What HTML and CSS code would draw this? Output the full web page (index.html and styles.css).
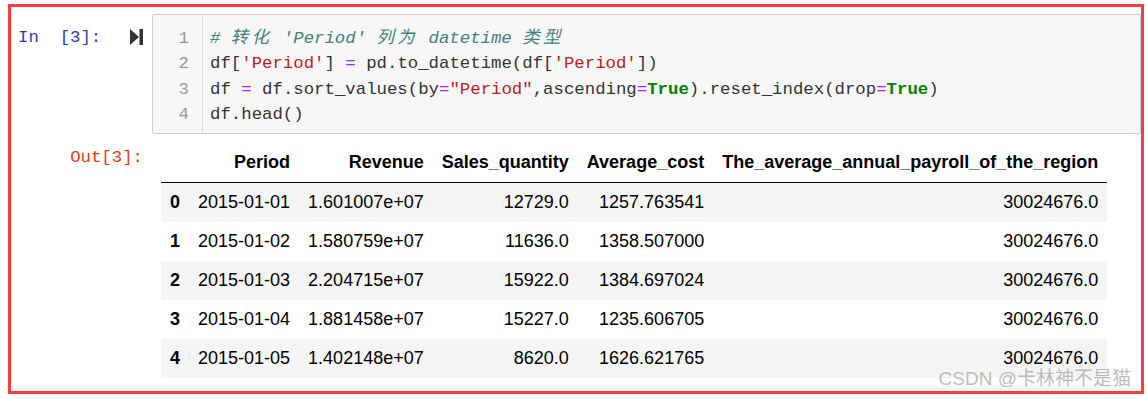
FILE: index.html
```html
<!DOCTYPE html>
<html lang="zh-CN">
<head>
  <meta charset="UTF-8">
  <title>df.head()</title>
  <link rel="stylesheet" href="styles.css">
</head>
<body>
  <div class="frame">
    <!-- 输入单元格 -->
    <div class="cell input-cell">
      <div class="prompt in-prompt">
        <span class="prompt-text">In  [3]:</span>
        <svg class="run-icon" width="13" height="16" viewBox="0 0 13 16">
          <polygon points="0,0 9,8 0,16" fill="#333"/>
          <rect x="9.5" y="0" width="3.5" height="16" fill="#333"/>
        </svg>
      </div>
      <div class="code-box">
        <div class="gutter">
          <div>1</div>
          <div>2</div>
          <div>3</div>
          <div>4</div>
        </div>
        <div class="code">
          <div class="line"><span class="c"># <span class="cjk">转化</span> 'Period' <span class="cjk">列为</span> datetime <span class="cjk">类型</span></span></div>
          <div class="line">df[<span class="s">'Period'</span>] <span class="o">=</span> pd.to_datetime(df[<span class="s">'Period'</span>])</div>
          <div class="line">df <span class="o">=</span> df.sort_values(by<span class="o">=</span><span class="s">"Period"</span>,ascending<span class="o">=</span><span class="k">True</span>).reset_index(drop<span class="o">=</span><span class="k">True</span>)</div>
          <div class="line">df.head()</div>
        </div>
      </div>
    </div>

    <!-- 输出单元格 -->
    <div class="cell output-cell">
      <div class="prompt out-prompt">Out[3]:</div>
      <div class="output">
        <table class="dataframe">
          <thead>
            <tr>
              <th></th>
              <th>Period</th>
              <th>Revenue</th>
              <th>Sales_quantity</th>
              <th>Average_cost</th>
              <th>The_average_annual_payroll_of_the_region</th>
            </tr>
          </thead>
          <tbody>
            <tr><th>0</th><td>2015-01-01</td><td>1.601007e+07</td><td>12729.0</td><td>1257.763541</td><td>30024676.0</td></tr>
            <tr><th>1</th><td>2015-01-02</td><td>1.580759e+07</td><td>11636.0</td><td>1358.507000</td><td>30024676.0</td></tr>
            <tr><th>2</th><td>2015-01-03</td><td>2.204715e+07</td><td>15922.0</td><td>1384.697024</td><td>30024676.0</td></tr>
            <tr><th>3</th><td>2015-01-04</td><td>1.881458e+07</td><td>15227.0</td><td>1235.606705</td><td>30024676.0</td></tr>
            <tr><th>4</th><td>2015-01-05</td><td>1.402148e+07</td><td>8620.0</td><td>1626.621765</td><td>30024676.0</td></tr>
          </tbody>
        </table>
      </div>
    </div>

    <div class="watermark">CSDN @卡林神不是猫</div>
  </div>
</body>
</html>
```

FILE: styles.css
```css
body {
  margin: 0;
  background: #fff;
  font-family: 'Liberation Sans', Arial, sans-serif;
}

.frame {
  position: relative;
  margin: 4px 0 0 8px;
  width: 1130px;
  height: 384px;
  border: 3px solid #fc3c3c;
  overflow: hidden;
}

.cell {
  display: flex;
}

.input-cell {
  margin-top: 7px;
}

.output-cell {
  margin-top: 9px;
}

.prompt {
  width: 141px;
  flex-shrink: 0;
  font-family: 'Liberation Mono', 'Noto Sans CJK SC', monospace;
  font-size: 17.35px;
  line-height: 25.4px;
}

.in-prompt {
  display: flex;
  align-items: flex-start;
  padding-top: 11px;
  color: #303f9f;
}

.prompt-text {
  white-space: pre;
  padding-left: 7px;
}

.run-icon {
  margin-left: auto;
  margin-right: 9px;
  margin-top: 4px;
}

.out-prompt {
  box-sizing: border-box;
  padding: 2px 9px 0 0;
  text-align: right;
  color: #d84315;
}

.code-box {
  flex: 1;
  display: flex;
  background: #f7f7f7;
  border: 1px solid #cfcfcf;
  border-radius: 2px;
  font-family: 'Liberation Mono', 'Noto Sans CJK SC', monospace;
  font-size: 17.35px;
  line-height: 25.4px;
}

.gutter {
  width: 50px;
  box-sizing: border-box;
  padding: 11px 13px 5px 0;
  border-right: 1px solid #ddd;
  text-align: right;
  color: #999;
}

.code {
  padding: 11px 0 5px 7px;
  color: #333;
}

.line {
  white-space: pre;
}

.c {
  color: #408080;
  font-style: italic;
}

.cjk {
  letter-spacing: 3.45px;
}

.s {
  color: #ba2121;
}

.o {
  color: #aa22ff;
}

.k {
  color: #008000;
  font-weight: bold;
}

.output {
  padding-left: 9px;
}

.dataframe {
  border-collapse: collapse;
  font-size: 18px;
  line-height: 21px;
  color: #000;
}

.dataframe th,
.dataframe td {
  padding: 9px;
  text-align: right;
  white-space: nowrap;
  vertical-align: middle;
}

.dataframe th {
  font-weight: bold;
}

.dataframe thead tr {
  border-bottom: 1px solid #000;
}

.dataframe tbody tr:nth-child(odd) {
  background: #f5f5f5;
}

.watermark {
  position: absolute;
  right: 10px;
  bottom: 0;
  font-size: 19px;
  line-height: 24px;
  color: rgba(160, 160, 160, 0.7);
  font-family: 'Liberation Sans', 'Noto Sans CJK SC', sans-serif;
}
```
